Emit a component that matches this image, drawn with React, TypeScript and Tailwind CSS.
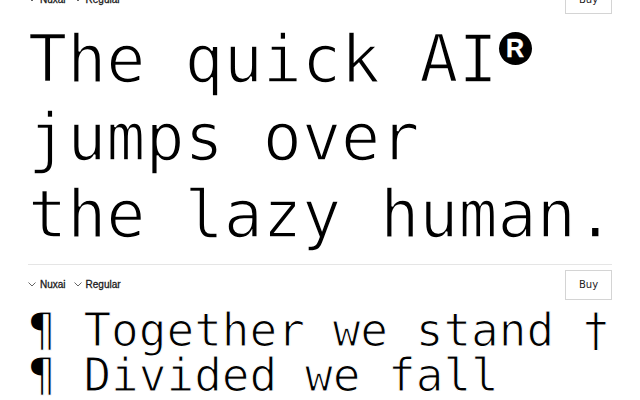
import React from "react";

const Chevron = () => (
  <svg width="8" height="5" viewBox="0 0 8 5" fill="none" className="shrink-0">
    <path d="M0.5 0.5 L4 4 L7.5 0.5" stroke="#666" strokeWidth="1" />
  </svg>
);

const Toolbar = () => (
  <div className="flex items-center justify-between h-[30px]">
    <div className="flex items-center gap-[8px] text-[10px] text-[#1a1a1a] font-['Liberation_Sans',Arial,sans-serif] [-webkit-text-stroke:0.3px_#1a1a1a]">
      <div className="flex items-center gap-[4px]">
        <Chevron />
        <span>Nuxai</span>
      </div>
      <div className="flex items-center gap-[4px]">
        <Chevron />
        <span>Regular</span>
      </div>
    </div>
    <button className="h-[30px] w-[47px] border border-[#d4d4d4] bg-white text-[10px] text-[#222] font-['DejaVu_Sans',sans-serif] flex items-center justify-center">
      Buy
    </button>
  </div>
);

export default function App() {
  return (
    <div className="w-[640px] h-[400px] overflow-hidden bg-white">
      <div className="px-[28px] -mt-[16px]">
        <section>
          <Toolbar />
          <div className="mt-[7px] font-['DejaVu_Sans_Mono',monospace] text-[65px] leading-[77.5px] text-black whitespace-pre [-webkit-text-stroke:1.6px_white]">
            <div>
              The quick AI
              <span className="inline-block w-[39px] align-top mt-[11px] [-webkit-text-stroke:0px]">
                <span className="ml-[1px] flex h-[33px] w-[33px] items-center justify-center rounded-full bg-black text-white font-['Liberation_Sans',Arial,sans-serif] font-semibold text-[25px] leading-none [-webkit-text-stroke:0.4px_white]">
                  R
                </span>
              </span>
            </div>
            <div>jumps over</div>
            <div>the lazy human.</div>
          </div>
          <div className="mt-[10px] h-px bg-[#e5e5e5]" />
        </section>
        <section className="mt-[5px]">
          <Toolbar />
          <div className="mt-[8px] font-['DejaVu_Sans_Mono',monospace] text-[46px] leading-[45px] text-black whitespace-pre [-webkit-text-stroke:1.1px_white]">
            <div>¶ Together we stand †</div>
            <div>¶ Divided we fall</div>
          </div>
        </section>
      </div>
    </div>
  );
}
